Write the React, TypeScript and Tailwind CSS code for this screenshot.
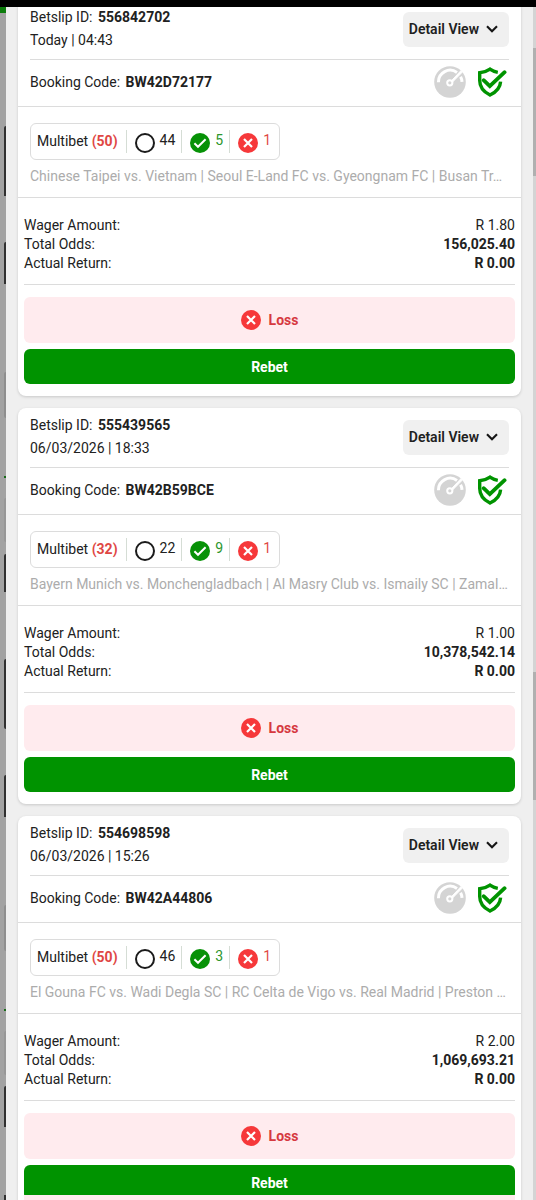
type Slip = {
  id: string;
  time: string;
  code: string;
  legs: number;
  open: number;
  won: number;
  lost: number;
  matches: string;
  wager: string;
  odds: string;
  returned: string;
};

const slips: Slip[] = [
  {
    id: "556842702",
    time: "Today | 04:43",
    code: "BW42D72177",
    legs: 50,
    open: 44,
    won: 5,
    lost: 1,
    matches: "Chinese Taipei vs. Vietnam | Seoul E-Land FC vs. Gyeongnam FC | Busan Tr…",
    wager: "R 1.80",
    odds: "156,025.40",
    returned: "R 0.00",
  },
  {
    id: "555439565",
    time: "06/03/2026 | 18:33",
    code: "BW42B59BCE",
    legs: 32,
    open: 22,
    won: 9,
    lost: 1,
    matches: "Bayern Munich vs. Monchengladbach | Al Masry Club vs. Ismaily SC | Zamal…",
    wager: "R 1.00",
    odds: "10,378,542.14",
    returned: "R 0.00",
  },
  {
    id: "554698598",
    time: "06/03/2026 | 15:26",
    code: "BW42A44806",
    legs: 50,
    open: 46,
    won: 3,
    lost: 1,
    matches: "El Gouna FC vs. Wadi Degla SC | RC Celta de Vigo vs. Real Madrid | Preston …",
    wager: "R 2.00",
    odds: "1,069,693.21",
    returned: "R 0.00",
  },
];

function GaugeIcon() {
  return (
    <svg width="32" height="32" viewBox="0 0 32 32" fill="none" aria-hidden="true">
      <circle cx="16" cy="16" r="15.8" fill="#d4d4d4" />
      <path d="M4.4 16.2A11.8 11.8 0 0 1 23 6.4" stroke="#fff" strokeWidth="3" />
      <path d="M26.6 10.8A11.8 11.8 0 0 1 28 15.8" stroke="#fff" strokeWidth="3" />
      <path d="M17 15.2L27 4.6L28.4 6L18 16.6Z" fill="#fff" stroke="#fff" strokeWidth="1" />
      <circle cx="15.8" cy="16.8" r="2.6" fill="#d4d4d4" stroke="#fff" strokeWidth="2" />
    </svg>
  );
}

function ShieldIcon() {
  return (
    <svg width="30" height="30" viewBox="0 0 30 30" fill="none" aria-hidden="true">
      <path
        d="M20.8 5.4C17.6 4.8 15.2 3.8 13 2.2C10 4.3 6.7 5.5 2.7 5.8V13.5C2.7 20.5 6.8 25 13 28C19 25.2 23.2 21 23.6 14.6"
        stroke="#009300"
        strokeWidth="3.4"
      />
      <path d="M6.6 13.2L12.8 19.2L27.6 5.2" stroke="#009300" strokeWidth="3.8" strokeLinecap="round" />
    </svg>
  );
}

function RingIcon() {
  return (
    <svg width="20" height="20" viewBox="0 0 20 20" fill="none" aria-hidden="true">
      <circle cx="10" cy="10" r="9" stroke="#1b1b1b" strokeWidth="2" />
    </svg>
  );
}

function CheckIcon() {
  return (
    <svg width="20" height="20" viewBox="0 0 20 20" fill="none" aria-hidden="true">
      <circle cx="10" cy="10" r="10" fill="#079207" />
      <path d="M4.4 10.2L8 13.8L15.6 6.2" stroke="#fff" strokeWidth="2" />
    </svg>
  );
}

function CrossIcon() {
  return (
    <svg width="20" height="20" viewBox="0 0 20 20" fill="none" aria-hidden="true">
      <circle cx="10" cy="10" r="10" fill="#f6383a" />
      <path d="M6 6L14 14M14 6L6 14" stroke="#fff" strokeWidth="2.2" />
    </svg>
  );
}

function ChevronIcon() {
  return (
    <svg width="12" height="8" viewBox="0 0 12 8" fill="none" aria-hidden="true">
      <path d="M1 1.2L6 6.2L11 1.2" stroke="#151515" strokeWidth="2.1" />
    </svg>
  );
}

function BetCard({ slip }: { slip: Slip }) {
  return (
    <article className="rounded-lg bg-white shadow-[0_1px_3px_rgba(0,0,0,0.16)]">
      <div className="px-3">
        <header className="flex items-center justify-between border-b border-[#dcdcdc] pt-1.5 pb-[7px]">
          <div className="leading-[23px]">
            <p>
              Betslip ID: <strong className="ml-0.5 font-bold">{slip.id}</strong>
            </p>
            <p>{slip.time}</p>
          </div>
          <button type="button" className="flex h-[35px] items-center gap-[7px] rounded-md bg-[#f0f0f0] pr-[11px] pl-1.5 font-semibold">
            Detail View
            <ChevronIcon />
          </button>
        </header>
        <div className="flex h-[46px] items-center justify-between pb-0.5">
          <p>
            Booking Code: <strong className="ml-0.5 font-bold">{slip.code}</strong>
          </p>
          <div className="flex items-center gap-[11px] pr-0.5">
            <GaugeIcon />
            <ShieldIcon />
          </div>
        </div>
      </div>

      <div className="border-y border-[#dcdcdc] px-3 pt-4 pb-[11px]">
        <div className="flex h-[37px] w-fit items-center divide-x divide-[#d5ddd5] rounded-md border border-[#dcdcdc] pr-0.5 pl-1.5 leading-[23px]">
          <p className="pr-2">
            Multibet <strong className="font-bold text-[#df4744]">({slip.legs})</strong>
          </p>
          <p className="flex gap-[5px] pr-1.5 pl-2">
            <span className="pt-[3px]"><RingIcon /></span>
            <span className="leading-5">{slip.open}</span>
          </p>
          <p className="flex gap-[5px] pr-1.5 pl-2 text-[#2c962c]">
            <span className="pt-[3px]"><CheckIcon /></span>
            <span className="leading-5">{slip.won}</span>
          </p>
          <p className="flex gap-[5px] pr-1.5 pl-2 text-[#df4744]">
            <span className="pt-[3px]"><CrossIcon /></span>
            <span className="leading-5">{slip.lost}</span>
          </p>
        </div>
        <p className="mt-1.5 truncate leading-5 text-[#acacac]">{slip.matches}</p>
      </div>

      <div className="px-1.5 pt-[18px] pb-3">
        <dl className="grid grid-cols-[auto_1fr] border-b border-[#dcdcdc] pb-[11px] leading-[19px]">
          <dt>Wager Amount:</dt>
          <dd className="text-right">{slip.wager}</dd>
          <dt>Total Odds:</dt>
          <dd className="text-right font-bold">{slip.odds}</dd>
          <dt>Actual Return:</dt>
          <dd className="text-right font-bold">{slip.returned}</dd>
        </dl>
        <p className="mt-3 flex h-[46px] items-center justify-center gap-2 rounded-md bg-[#ffebee] font-bold text-[#d6393f]">
          <CrossIcon />
          Loss
        </p>
        <button type="button" className="mt-1.5 h-[35px] w-full rounded-md bg-[#009300] font-bold text-white">
          Rebet
        </button>
      </div>
    </article>
  );
}

function PageEdge() {
  return (
    <div className="flex w-1.5 shrink-0 flex-col items-end bg-[#a2a2a2] pt-[7px]" aria-hidden="true">
      <i className="h-1.5 w-full shrink-0 bg-[#0b7c0b]" />
      <i className="mt-[113px] h-[70px] w-0.5 shrink-0 rounded-tl bg-[#303030]" />
      <i className="mt-[46px] h-[42px] w-0.5 shrink-0 rounded-tl bg-[#303030]" />
      <i className="mt-[88px] h-[46px] w-0.5 shrink-0 rounded-l bg-[#8e8e8e]" />
      <i className="mt-[58px] h-0.5 w-0.5 shrink-0 bg-[#176b17]" />
      <i className="mt-[20px] h-[44px] w-0.5 shrink-0 rounded-l bg-[#979797]" />
      <i className="mt-[12px] h-[38px] w-0.5 shrink-0 rounded-tl bg-[#303030]" />
      <i className="mt-[67px] h-[70px] w-0.5 shrink-0 rounded-l bg-[#303030]" />
      <i className="mt-[46px] h-[42px] w-0.5 shrink-0 rounded-tl bg-[#303030]" />
      <i className="mt-[88px] h-[46px] w-0.5 shrink-0 rounded-l bg-[#8e8e8e]" />
      <i className="mt-[58px] h-0.5 w-0.5 shrink-0 bg-[#176b17]" />
      <i className="mt-[20px] h-[44px] w-0.5 shrink-0 rounded-l bg-[#979797]" />
      <i className="mt-[11px] h-[41px] w-0.5 shrink-0 rounded-tl bg-[#303030]" />
      <i className="mt-[68px] h-[42px] w-0.5 shrink-0 bg-[#303030]" />
    </div>
  );
}

export default function App() {
  return (
    <div className="relative flex h-screen overflow-hidden bg-[#efefef] font-[Roboto,'Liberation_Sans',sans-serif] text-sm text-[#212121]">
      <div className="absolute inset-x-0 top-0 z-10 h-[7px] bg-black" />
      <PageEdge />
      <main className="flex min-w-0 flex-1 flex-col gap-3 px-3">
        {slips.map((slip) => (
          <BetCard key={slip.id} slip={slip} />
        ))}
      </main>
      <div className="flex w-[3px] shrink-0 flex-col bg-[#d4d4d4] pt-12" aria-hidden="true">
        <i className="h-32 shrink-0 bg-[#b0b0b0]" />
        <i className="mt-[496px] h-32 shrink-0 bg-[#b0b0b0]" />
      </div>
      <div className="absolute bottom-0 left-6 right-[21px] h-[5px] bg-[#ffebee]" />
    </div>
  );
}
